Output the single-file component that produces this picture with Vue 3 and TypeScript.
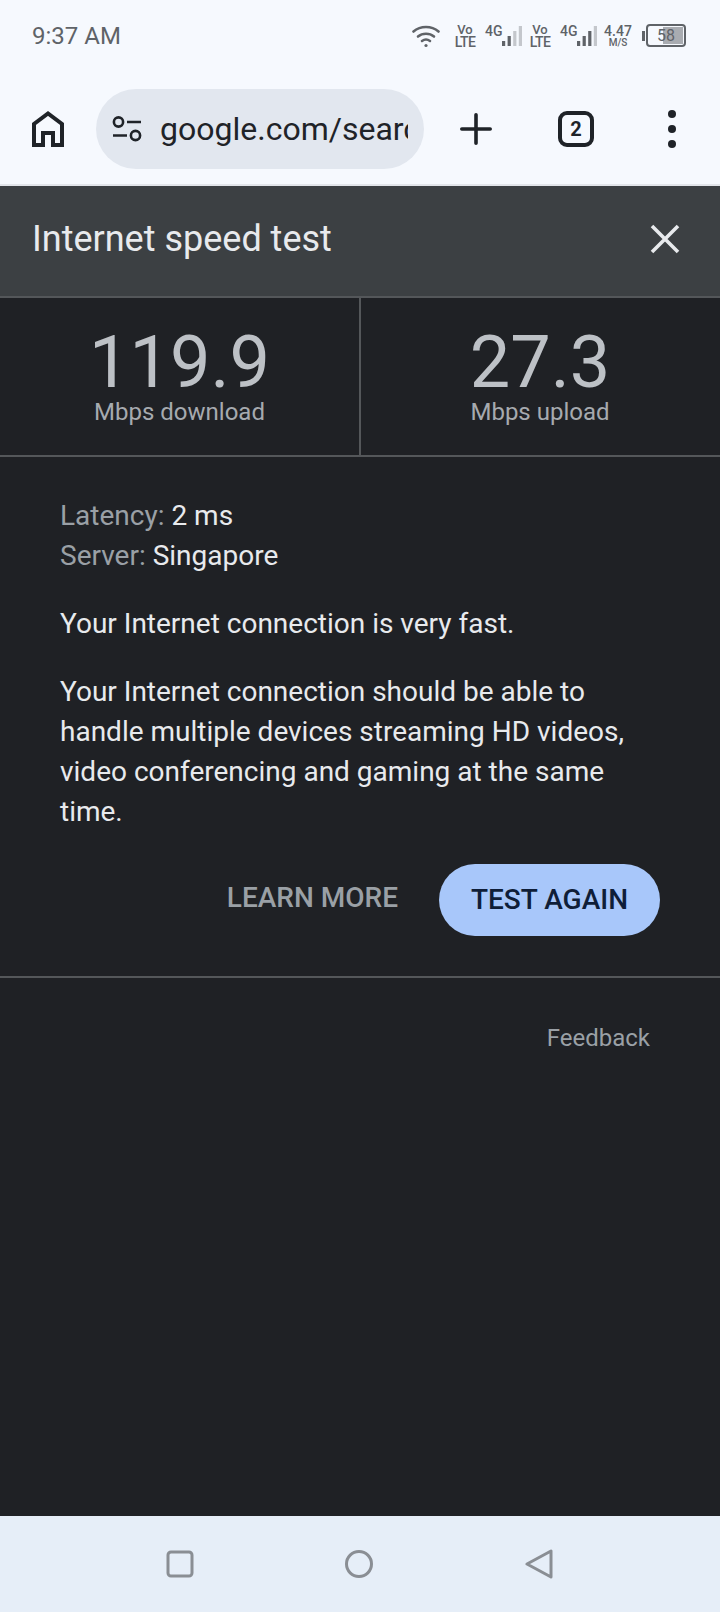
<script setup lang="ts">
// Datos de la prueba de velocidad
const stats = [
  { value: '119.9', label: 'Mbps download' },
  { value: '27.3', label: 'Mbps upload' },
]
const sims = [
  { bars: ['#5f6368', '#5f6368', '#c4c7cc', '#c4c7cc'] },
  { bars: ['#5f6368', '#5f6368', '#5f6368', '#c4c7cc'] },
]
const barHeights = [5, 10, 15, 20]
</script>

<template>
  <div class="phone">
    <div class="status-bar">
      <span class="clock">9:37 AM</span>
      <div class="status-icons">
        <svg class="wifi" width="28" height="24" viewBox="0 0 28 24" fill="none" stroke="#5f6368" stroke-width="2.6" stroke-linecap="round">
          <path d="M1.5 7.5C8.5 1.5 19.5 1.5 26.5 7.5" />
          <path d="M6 12.5C10.5 8.8 17.5 8.8 22 12.5" />
          <path d="M10 17C12.4 15.2 15.6 15.2 18 17" />
          <circle cx="14" cy="21.5" r="1.6" fill="#5f6368" stroke="none" />
        </svg>
        <template v-for="(sim, i) in sims" :key="i">
          <div class="volte"><span>Vo</span><span class="lte">LTE</span></div>
          <div class="signal">
            <span class="net">4G</span>
            <svg width="21" height="21" viewBox="0 0 21 21">
              <rect v-for="(h, n) in barHeights" :key="n" :x="n * 5.6 + 1" :y="21 - h" width="3.2" :height="h" :fill="sim.bars[n]" />
            </svg>
          </div>
        </template>
        <div class="speed"><span class="speed-num">4.47</span><span class="speed-unit">M/S</span></div>
        <div class="battery">
          <span class="nub"></span>
          <div class="cell"><span class="level"></span><span class="percent">58</span></div>
        </div>
      </div>
    </div>

    <div class="toolbar">
      <svg class="home" width="32" height="36" viewBox="0 0 32 36" fill="none" stroke="#1f2328" stroke-width="4">
        <path d="M2 34V13L16 2.5 30 13V34H21V22H11V34Z" />
      </svg>
      <div class="omnibox">
        <svg width="30" height="26" viewBox="0 0 30 26" fill="none" stroke="#1f2328" stroke-width="2.6">
          <circle cx="6.5" cy="6" r="4.6" />
          <path d="M15 6H29" />
          <circle cx="23.5" cy="19.5" r="4.6" />
          <path d="M1 19.5H15" />
        </svg>
        <span class="url">google.com/search</span>
      </div>
      <svg class="plus" width="32" height="32" viewBox="0 0 32 32" stroke="#1f2328" stroke-width="3.6" stroke-linecap="round">
        <path d="M1.8 16H30.2M16 1.8V30.2" />
      </svg>
      <div class="tabs">2</div>
      <div class="menu"><span></span><span></span><span></span></div>
    </div>

    <div class="panel-head">
      <span class="panel-title">Internet speed test</span>
      <svg width="30" height="30" viewBox="0 0 30 30" stroke="#e8eaed" stroke-width="3.6">
        <path d="M2 2L28 28M28 2L2 28" />
      </svg>
    </div>

    <div class="stats">
      <div v-for="stat in stats" :key="stat.label" class="stat">
        <div class="stat-value">{{ stat.value }}</div>
        <div class="stat-label">{{ stat.label }}</div>
      </div>
    </div>

    <div class="details">
      <p class="meta"><span class="key">Latency:</span> 2 ms</p>
      <p class="meta"><span class="key">Server:</span> Singapore</p>
      <p class="summary">Your Internet connection is very fast.</p>
      <p class="summary">Your Internet connection should be able to handle multiple devices streaming HD videos, video conferencing and gaming at the same time.</p>
      <div class="actions">
        <span class="learn">LEARN MORE</span>
        <span class="again">TEST AGAIN</span>
      </div>
    </div>

    <div class="feedback-row">
      <span class="feedback">Feedback</span>
    </div>

    <div class="nav-bar">
      <svg width="28" height="28" viewBox="0 0 28 28" fill="none" stroke="#8a8e94" stroke-width="3">
        <rect x="2" y="2" width="24" height="24" rx="3" />
      </svg>
      <svg width="30" height="30" viewBox="0 0 30 30" fill="none" stroke="#8a8e94" stroke-width="3">
        <circle cx="15" cy="15" r="12.5" />
      </svg>
      <svg width="30" height="30" viewBox="0 0 30 30" fill="none" stroke="#8a8e94" stroke-width="3" stroke-linejoin="round">
        <path d="M27 2V28L3 15Z" />
      </svg>
    </div>
  </div>
</template>

<style>
html,
body {
  margin: 0;
  background: #1f2125;
}
</style>

<style scoped>
.phone {
  width: 720px;
  height: 1612px;
  display: flex;
  flex-direction: column;
  background: #1f2125;
  font-family: Roboto, "Liberation Sans", sans-serif;
  overflow: hidden;
}

.status-bar {
  height: 74px;
  flex: none;
  box-sizing: border-box;
  padding: 24px 34px 0 32px;
  display: flex;
  justify-content: space-between;
  align-items: flex-start;
  background: #f6f9fe;
}

.clock {
  font-size: 24px;
  line-height: 24px;
  color: #5f6368;
}

.status-icons {
  display: flex;
  align-items: flex-start;
  color: #5f6368;
}

.wifi {
  margin-right: 15px;
}

.volte {
  width: 20px;
  display: flex;
  flex-direction: column;
  align-items: center;
  font-size: 13px;
  line-height: 12px;
  font-weight: 500;
  margin-right: 10px;
}

.lte {
  font-size: 14px;
  letter-spacing: -0.6px;
}

.signal {
  width: 37px;
  height: 22px;
  display: flex;
  position: relative;
  margin-right: 8px;
}

.signal svg {
  position: absolute;
  left: 16px;
  top: 1px;
}

.net {
  font-size: 14px;
  line-height: 14px;
  font-weight: 500;
}

.speed {
  width: 28px;
  margin: 0 10px 0 -1px;
  display: flex;
  flex-direction: column;
  align-items: center;
}

.speed-num {
  font-size: 14px;
  line-height: 14px;
  font-weight: 500;
}

.speed-unit {
  font-size: 10px;
  line-height: 10px;
  font-weight: 500;
}

.battery {
  display: flex;
  align-items: center;
  height: 23px;
}

.nub {
  width: 3px;
  height: 10px;
  background: #5f6368;
  margin-right: 1px;
}

.cell {
  position: relative;
  width: 40px;
  height: 23px;
  box-sizing: border-box;
  border: 2px solid #5f6368;
  border-radius: 4px;
}

.level {
  position: absolute;
  right: 1px;
  top: 1px;
  bottom: 1px;
  width: 20px;
  background: #a9acb1;
}

.percent {
  position: absolute;
  left: 9px;
  top: 0;
  font-size: 16px;
  line-height: 19px;
  color: #5f6368;
}

.toolbar {
  height: 112px;
  flex: none;
  box-sizing: border-box;
  display: flex;
  align-items: center;
  padding: 0 0 1px 32px;
  background: #f6f9fe;
  border-bottom: 2px solid #e2e5ea;
  color: #1f2328;
}

.omnibox {
  width: 328px;
  height: 80px;
  margin-left: 32px;
  box-sizing: border-box;
  padding: 0 16px 0 16px;
  display: flex;
  align-items: center;
  gap: 18px;
  border-radius: 40px;
  background: #e2e7ef;
  overflow: hidden;
}

.omnibox svg {
  flex: none;
}

.url {
  font-size: 32px;
  white-space: nowrap;
  overflow: hidden;
  color: #1f2328;
}

.plus {
  margin-left: 36px;
}

.tabs {
  width: 36px;
  height: 36px;
  margin-left: 66px;
  box-sizing: border-box;
  border: 4px solid #1f2328;
  border-radius: 9px;
  display: flex;
  align-items: center;
  justify-content: center;
  font-size: 20px;
  font-weight: 700;
}

.menu {
  margin-left: 74px;
  display: flex;
  flex-direction: column;
  gap: 7px;
}

.menu span {
  width: 8px;
  height: 8px;
  border-radius: 50%;
  background: #1f2328;
}

.panel-head {
  height: 112px;
  flex: none;
  box-sizing: border-box;
  display: flex;
  align-items: center;
  justify-content: space-between;
  padding: 0 40px 4px 32px;
  background: #3c4043;
  border-bottom: 2px solid #54575a;
}

.panel-title {
  font-size: 36px;
  color: #e8eaed;
}

.stats {
  height: 157px;
  flex: none;
  display: grid;
  grid-template-columns: 360px 360px;
  border-bottom: 2px solid #54575a;
}

.stat {
  display: flex;
  flex-direction: column;
  align-items: center;
  padding-top: 30px;
  color: #bdc1c6;
}

.stat:first-child {
  border-right: 2px solid #54575a;
  margin-right: -1px;
}

.stat-value {
  font-size: 72px;
  line-height: 70px;
  font-weight: 400;
}

.stat-label {
  font-size: 24px;
  line-height: 28px;
  color: #a6aaaf;
}

.details {
  height: 521px;
  flex: none;
  box-sizing: border-box;
  padding: 39px 60px 0;
  border-bottom: 2px solid #54575a;
  color: #e8eaed;
  font-size: 28px;
  line-height: 40px;
}

.details p {
  margin: 0;
}

.key {
  color: #9aa0a6;
}

.summary {
  margin-top: 28px !important;
}

.actions {
  display: flex;
  justify-content: flex-end;
  align-items: center;
  gap: 41px;
  margin: 32px 0 0;
}

.learn {
  color: #9aa0a6;
  font-size: 28px;
  font-weight: 500;
  line-height: 32px;
  margin-top: -4px;
}

.again {
  width: 221px;
  height: 72px;
  display: flex;
  align-items: center;
  justify-content: center;
  border-radius: 36px;
  background: #a8c7fa;
  color: #0f1e38;
  font-size: 28px;
  font-weight: 500;
}

.feedback-row {
  flex: 1;
  display: flex;
  justify-content: flex-end;
  padding: 44px 70px 0 0;
}

.feedback {
  color: #9aa0a6;
  font-size: 24px;
  line-height: 32px;
}

.nav-bar {
  height: 96px;
  flex: none;
  display: flex;
  align-items: center;
  box-sizing: border-box;
  padding: 0 166px;
  justify-content: space-between;
  background: #e6eef8;
}
</style>
